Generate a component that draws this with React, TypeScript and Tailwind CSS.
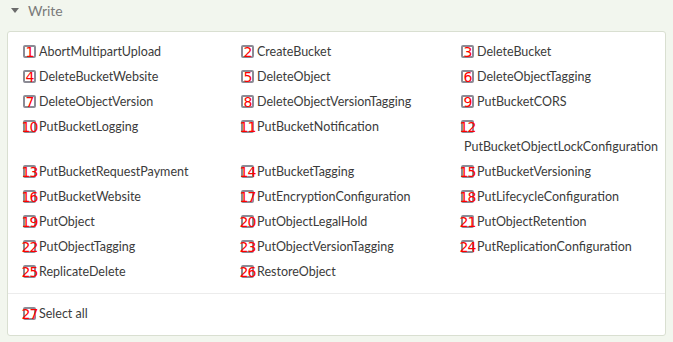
const actions = [
  'AbortMultipartUpload',
  'CreateBucket',
  'DeleteBucket',
  'DeleteBucketWebsite',
  'DeleteObject',
  'DeleteObjectTagging',
  'DeleteObjectVersion',
  'DeleteObjectVersionTagging',
  'PutBucketCORS',
  'PutBucketLogging',
  'PutBucketNotification',
  'PutBucketObjectLockConfiguration',
  'PutBucketRequestPayment',
  'PutBucketTagging',
  'PutBucketVersioning',
  'PutBucketWebsite',
  'PutEncryptionConfiguration',
  'PutLifecycleConfiguration',
  'PutObject',
  'PutObjectLegalHold',
  'PutObjectRetention',
  'PutObjectTagging',
  'PutObjectVersionTagging',
  'PutReplicationConfiguration',
  'ReplicateDelete',
  'RestoreObject',
];

function Box({ n }: { n: number }) {
  return (
    <span className="relative inline-block w-[13px] h-[13px] align-[-2px] border-2 border-[#8b8b95] rounded-[2px] bg-white">
      <span className="absolute inset-0 flex items-center justify-center text-[14px] leading-none text-[#ff0000] font-['DejaVu_Sans',sans-serif] tracking-[-1px]">
        {n}
      </span>
    </span>
  );
}

function Item({ n, label }: { n: number; label: string }) {
  return (
    <div className="leading-[20px]">
      <Box n={n} />
      <span className="inline-block pl-[3px]">{label}</span>
    </div>
  );
}

export default function App() {
  return (
    <div className="w-[673px] h-[342px] bg-[#f2f6ee] font-['Lato',sans-serif] text-[12.5px] text-[#3b3b3b]">
      <div className="h-[21px] flex items-center pl-[11px]">
        <svg width="8" height="5" viewBox="0 0 8 5" className="mr-[9px]">
          <path d="M0 0h8L4 5z" fill="#6b6b6b" />
        </svg>
        <span className="text-[14px] text-[#7a7a7a]">Write</span>
      </div>
      <div className="mt-[10px] ml-[7px] w-[659px] bg-white border border-[#d9dfd1] rounded-[3px]">
        <div className="grid grid-cols-[218px_220px_198px] gap-y-[5px] pl-[15px] pt-[10px] pb-[11px]">
          {actions.map((a, i) => (
            <Item key={a} n={i + 1} label={a} />
          ))}
        </div>
        <div className="border-t border-[#ececec] pl-[15px] pt-[10px] pb-[11px]">
          <div className="leading-[20px]">
            <Box n={27} />
            <span className="pl-[3px]">Select all</span>
          </div>
        </div>
      </div>
    </div>
  );
}
